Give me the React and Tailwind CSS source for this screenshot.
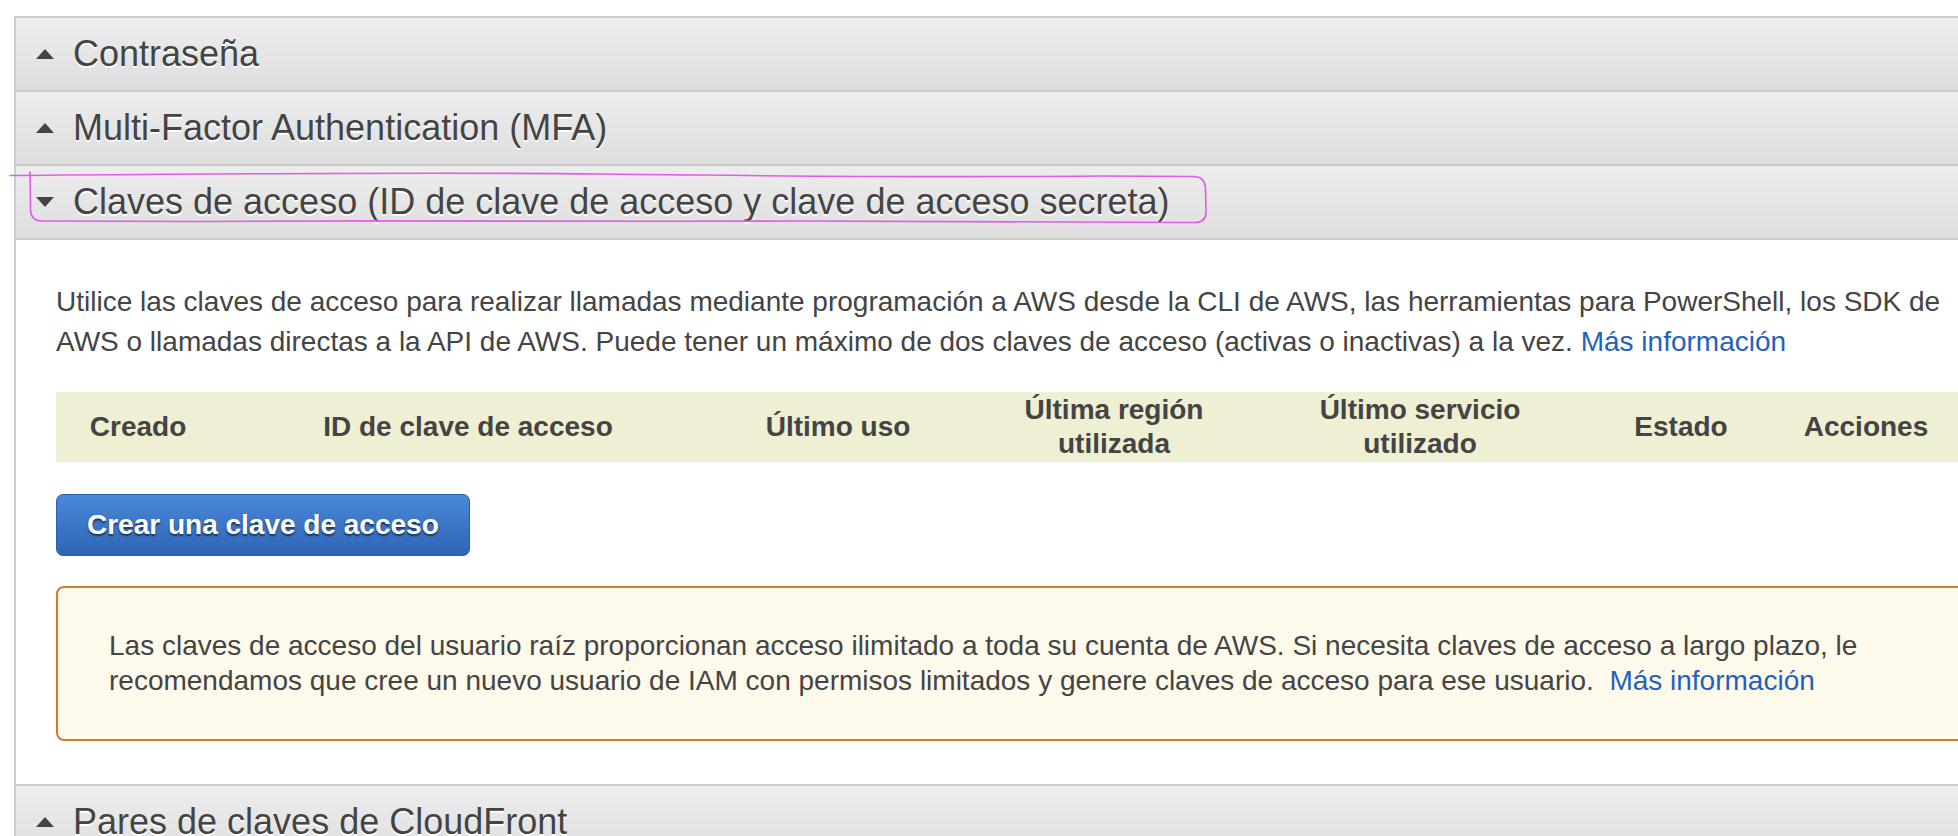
import React from 'react';

const font = { fontFamily: '"Liberation Sans", Arial, sans-serif' };

function Caret({ open }) {
  return (
    <svg width="18" height="10" viewBox="0 0 18 10" className="shrink-0">
      {open ? (
        <polygon points="0,0 18,0 9,10" fill="#444" />
      ) : (
        <polygon points="0,10 18,10 9,0" fill="#444" />
      )}
    </svg>
  );
}

function SectionHeader({ title, open }) {
  return (
    <div className="h-[74px] flex items-center gap-[19px] pl-[20px] bg-gradient-to-b from-[#ededed] to-[#dedede] border-b-2 border-[#cbcbcb]">
      <Caret open={open} />
      <span className="text-[36px] text-[#444] whitespace-nowrap [text-shadow:0_2px_0_#fff]">{title}</span>
    </div>
  );
}

const columns = [
  { label: 'Creado', w: 'w-[164px]' },
  { label: 'ID de clave de acceso', w: 'w-[496px]' },
  { label: 'Último uso', w: 'w-[244px]' },
  { label: ['Última región', 'utilizada'], w: 'w-[308px]' },
  { label: ['Último servicio', 'utilizado'], w: 'w-[304px]' },
  { label: 'Estado', w: 'w-[218px]' },
  { label: 'Acciones', w: 'w-[152px]' },
];

export default function App() {
  return (
    <div className="relative min-h-screen bg-white overflow-hidden pt-[16px] pl-[14px]" style={font}>
      <div className="w-[2000px] border-t-2 border-l-2 border-[#cbcbcb]">
        <SectionHeader title="Contraseña" />
        <SectionHeader title="Multi-Factor Authentication (MFA)" />
        <SectionHeader title="Claves de acceso (ID de clave de acceso y clave de acceso secreta)" open />

        {/* Access keys body */}
        <div className="pl-[40px] pt-[42px] pb-[43px] border-b-2 border-[#cbcbcb]">
          <p className="text-[28px] leading-[40px] text-[#444] whitespace-nowrap">
            Utilice las claves de acceso para realizar llamadas mediante programación a AWS desde la CLI de AWS, las herramientas para PowerShell, los SDK de
            <br />
            AWS o llamadas directas a la API de AWS. Puede tener un máximo de dos claves de acceso (activas o inactivas) a la vez.{' '}
            <span className="text-[#1f62bd]">Más información</span>
          </p>

          <div className="mt-[30px] h-[70px] flex items-center bg-[#eeefd3] text-[28px] leading-[34px] font-bold text-[#444]">
            {columns.map((c, i) => (
              <div key={i} className={`${c.w} shrink-0 text-center`}>
                {Array.isArray(c.label) ? (
                  <>
                    {c.label[0]}
                    <br />
                    {c.label[1]}
                  </>
                ) : (
                  c.label
                )}
              </div>
            ))}
          </div>

          <button className="mt-[32px] h-[62px] px-[30px] rounded-[7px] border border-[#2a5fae] bg-gradient-to-b from-[#4b88d8] to-[#2d64b6] text-white text-[28px] font-bold [text-shadow:0_2px_2px_rgba(0,0,0,0.55)]">
            Crear una clave de acceso
          </button>

          <div className="mt-[30px] w-[1960px] rounded-[8px] border-2 border-[#d37a2f] bg-[#fefaeb] pl-[51px] pt-[40px] pb-[41px] text-[28px] leading-[35px] text-[#444] whitespace-nowrap">
            Las claves de acceso del usuario raíz proporcionan acceso ilimitado a toda su cuenta de AWS. Si necesita claves de acceso a largo plazo, le
            <br />
            recomendamos que cree un nuevo usuario de IAM con permisos limitados y genere claves de acceso para ese usuario.&nbsp;{' '}
            <span className="text-[#1f62bd]">Más información</span>
          </div>
        </div>

        <SectionHeader title="Pares de claves de CloudFront" />
      </div>

      {/* hand-drawn annotation */}
      <svg className="absolute top-0 left-0 pointer-events-none" width="1958" height="836" viewBox="0 0 1958 836">
        <path
          d="M10 175.5 C 200 174, 400 172, 600 174 S 900 178, 1100 176 L 1194 176.5 Q 1205 177, 1205.5 188 L 1206 212 Q 1206 222.5, 1195 222.5 L 800 221 C 600 222, 400 220, 200 221.5 L 42 221 Q 31 221, 30.5 210 L 30 172"
          fill="none"
          stroke="#e35be6"
          strokeWidth="1.6"
          strokeLinecap="round"
        />
      </svg>
    </div>
  );
}
